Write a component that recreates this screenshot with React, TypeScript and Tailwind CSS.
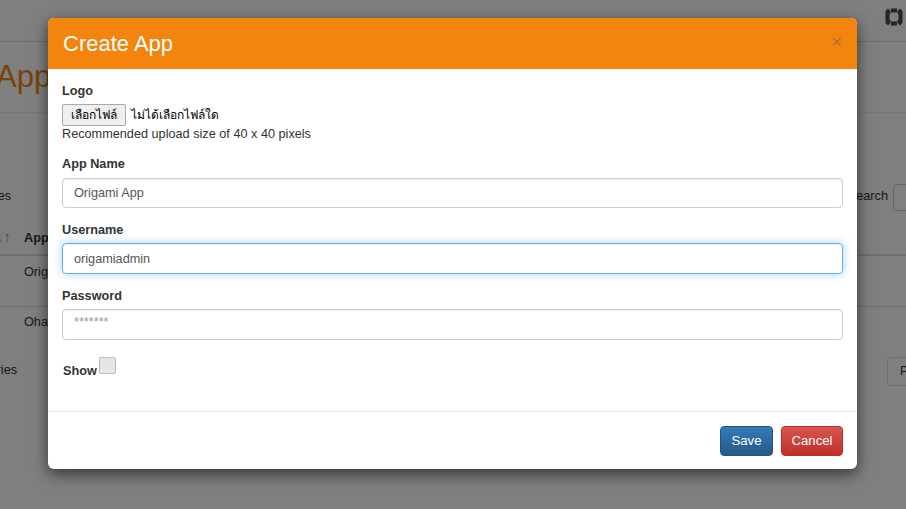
export default function App() {
  return (
    <div className="relative h-[509px] w-[906px] overflow-hidden bg-white font-['Liberation_Sans',Arial,sans-serif] text-[12.7px] text-[#333]">
      {/* page behind the dialog */}
      <header className="flex h-[42px] justify-end border-b border-[#ddd] pr-[3px] pt-[8px]">
        <svg width="18" height="18" viewBox="0 0 18 18" fill="#4a4a4a">
          <path d="M3 0.5 L5.5 3 V6 H0.5 V3 Z" />
          <path d="M6 0.5 H12 V4.5 H6 Z" />
          <path d="M15 0.5 L17.5 3 V6 H12.5 V3 Z" />
          <path d="M0.5 6 H4.5 V12 H0.5 Z" />
          <path d="M13.5 6 H17.5 V12 H13.5 Z" />
          <path d="M0.5 12 H5.5 V15 L3 17.5 L0.5 15 Z" />
          <path d="M6 13.5 H12 V17.5 H6 Z" />
          <path d="M12.5 12 H17.5 V15 L15 17.5 L12.5 15 Z" />
        </svg>
      </header>
      <h1 className="ml-[-4px] h-[71px] border-b border-[#eee] pt-[16px] text-[31px] leading-[38px] text-[#f3840d]">
        Apps
      </h1>
      <div className="mt-[74px] flex h-[20px] items-center justify-between">
        <span className="ml-[-27px]">entries</span>
        <div className="flex items-center gap-[5px]">
          <span>Search</span>
          <div className="mr-[-27px] h-[27px] w-[40px] rounded-[3px] border border-[#ccc]" />
        </div>
      </div>
      <div className="mt-[20px] flex h-[29px] gap-[14px] border-b-2 border-[#ddd] pt-[2px] font-bold">
        <span className="ml-[-4px] w-[14px] text-[15px] leading-[15px] text-[#aaa]">↓↑</span>
        <span>App Name</span>
      </div>
      <div className="h-[51px] border-b border-[#ddd] pl-[24px] pt-[7px]">Origami App</div>
      <div className="h-[50px] pl-[24px] pt-[6px]">Ohayo App</div>
      <div className="flex items-center justify-between">
        <span className="ml-[-21px] mt-[-2px]">entries</span>
        <span className="mr-[-30px] flex h-[29px] w-[49px] items-center rounded-[3px] border border-[#ddd] pl-[12px]">
          Previous
        </span>
      </div>

      {/* backdrop */}
      <div className="absolute inset-0 bg-black/50" />

      {/* dialog */}
      <div className="absolute left-[48px] top-[18px] w-[809px] rounded-[6px] bg-white shadow-[0_5px_15px_rgba(0,0,0,0.6)]">
        <div className="flex h-[51px] items-center justify-between rounded-t-[6px] bg-[#f3840d] pl-[15px] pr-[15px]">
          <h2 className="text-[22px] text-white">Create App</h2>
          <span className="mt-[-4px] text-[19px] leading-none text-[#b0702f]">×</span>
        </div>
        <div className="h-[342px] px-[14px] pt-[11px]">
          <label className="block h-[20px] font-bold leading-[22px]">Logo</label>
          <div className="mt-[4px] flex h-[22px] items-center gap-[5px]">
            <button type="button" className="h-[22px] w-[64px] rounded-[2px] border border-[#aaa] bg-[#efefef] text-[12px] text-black">
              เลือกไฟล์
            </button>
            <span className="text-[12px] text-black">ไม่ได้เลือกไฟล์ใด</span>
          </div>
          <p className="h-[18px] leading-[16px]">Recommended upload size of 40 x 40 pixels</p>
          <label className="mt-[9px] block h-[20px] font-bold leading-[22px]">App Name</label>
          <input
            className="mt-[5px] block h-[30px] w-full rounded-[4px] border border-[#ccc] px-[11px] text-[#555] shadow-[inset_0_1px_1px_rgba(0,0,0,0.075)] outline-none"
            defaultValue="Origami App"
          />
          <label className="mt-[11px] block h-[20px] font-bold leading-[22px]">Username</label>
          <input
            className="mt-[4px] block h-[31px] w-full rounded-[4px] border border-[#66afe9] px-[11px] text-[#555] shadow-[inset_0_1px_1px_rgba(0,0,0,0.075),0_0_8px_rgba(102,175,233,0.6)] outline-none"
            defaultValue="origamiadmin"
          />
          <label className="mt-[11px] block h-[20px] font-bold leading-[22px]">Password</label>
          <input
            className="mt-[4px] block h-[31px] w-full rounded-[4px] border border-[#ccc] px-[11px] pb-[6px] text-[#999] placeholder:text-[#999] shadow-[inset_0_1px_1px_rgba(0,0,0,0.075)] outline-none"
            placeholder="*******"
          />
          <div className="ml-[1px] mt-[17px] flex items-start gap-[2px]">
            <span className="mt-[5px] font-bold">Show</span>
            <span className="h-[17px] w-[17px] rounded-[2px] border border-[#bbb] bg-[#e6e6e6]" />
          </div>
        </div>
        <div className="flex h-[58px] items-start justify-end gap-[8px] border-t border-[#e5e5e5] pr-[14px] pt-[14px]">
          <button type="button" className="h-[30px] w-[53px] rounded-[4px] border border-[#245580] bg-gradient-to-b from-[#337ab7] to-[#265a88] text-[13.2px] text-white">
            Save
          </button>
          <button type="button" className="h-[30px] w-[62px] rounded-[4px] border border-[#b92c28] bg-gradient-to-b from-[#d9534f] to-[#c12e2a] text-[13.2px] text-white">
            Cancel
          </button>
        </div>
      </div>
    </div>
  );
}
